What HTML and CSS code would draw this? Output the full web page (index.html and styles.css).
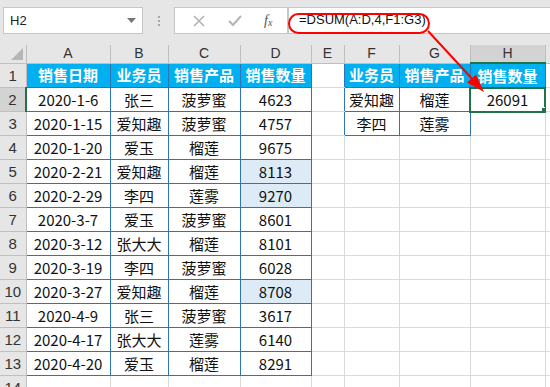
FILE: index.html
```html
<!DOCTYPE html>
<html lang="zh-CN">
<head>
    <meta charset="UTF-8">
    <title>DSUM</title>
    <link rel="stylesheet" href="styles.css">
</head>
<body>
    <div class="toolbar">
        <div class="name-box">
            <span>H2</span>
            <svg class="caret" width="9" height="5" viewBox="0 0 9 5"><path d="M0 0h9L4.5 5z" fill="#777"/></svg>
        </div>
        <div class="dots"><i></i><i></i><i></i></div>
        <div class="fx-box">
            <svg width="14" height="14" viewBox="0 0 14 14"><path d="M2 2l10 10M12 2L2 12" stroke="#b4b4b4" stroke-width="1.6"/></svg>
            <svg width="16" height="14" viewBox="0 0 16 14"><path d="M2 7l4 4 8-9" stroke="#b4b4b4" stroke-width="2" fill="none"/></svg>
            <span class="fx">f<sub>x</sub></span>
        </div>
        <div class="formula">=DSUM(A:D,4,F1:G3)</div>
    </div>

    <table class="sheet">
        <colgroup>
            <col class="c-rh"><col class="c-a"><col class="c-b"><col class="c-c"><col class="c-d">
            <col class="c-e"><col class="c-f"><col class="c-g"><col class="c-h"><col class="c-i">
        </colgroup>
        <tr class="col-heads">
            <th class="corner"><span class="tri"></span></th>
            <th>A</th><th>B</th><th>C</th><th>D</th><th>E</th><th>F</th><th>G</th><th class="sel-col">H</th><th></th>
        </tr>
        <tr>
            <th class="rh">1</th>
            <td class="b hd">销售日期</td><td class="b hd">业务员</td><td class="b hd">销售产品</td><td class="b hd">销售数量</td>
            <td class="nr"></td>
            <td class="b hd">业务员</td><td class="b hd">销售产品</td><td class="b hd">销售数量</td><td></td>
        </tr>
        <tr>
            <th class="rh sel-row">2</th>
            <td class="b">2020-1-6</td><td class="b">张三</td><td class="b">菠萝蜜</td><td class="b">4623</td>
            <td class="nr"></td>
            <td class="b">爱知趣</td><td class="b">榴莲</td><td class="active">26091</td><td></td>
        </tr>
        <tr>
            <th class="rh">3</th>
            <td class="b">2020-1-15</td><td class="b">爱知趣</td><td class="b">菠萝蜜</td><td class="b">4757</td>
            <td class="nr"></td>
            <td class="b">李四</td><td class="b">莲雾</td><td></td><td></td>
        </tr>
        <tr>
            <th class="rh">4</th>
            <td class="b">2020-1-20</td><td class="b">爱玉</td><td class="b">榴莲</td><td class="b">9675</td>
            <td></td><td></td><td></td><td></td><td></td>
        </tr>
        <tr>
            <th class="rh">5</th>
            <td class="b">2020-2-21</td><td class="b">爱知趣</td><td class="b">榴莲</td><td class="b hl">8113</td>
            <td></td><td></td><td></td><td></td><td></td>
        </tr>
        <tr>
            <th class="rh">6</th>
            <td class="b">2020-2-29</td><td class="b">李四</td><td class="b">莲雾</td><td class="b hl">9270</td>
            <td></td><td></td><td></td><td></td><td></td>
        </tr>
        <tr>
            <th class="rh">7</th>
            <td class="b">2020-3-7</td><td class="b">爱玉</td><td class="b">菠萝蜜</td><td class="b">8601</td>
            <td></td><td></td><td></td><td></td><td></td>
        </tr>
        <tr>
            <th class="rh">8</th>
            <td class="b">2020-3-12</td><td class="b">张大大</td><td class="b">榴莲</td><td class="b">8101</td>
            <td></td><td></td><td></td><td></td><td></td>
        </tr>
        <tr>
            <th class="rh">9</th>
            <td class="b">2020-3-19</td><td class="b">李四</td><td class="b">菠萝蜜</td><td class="b">6028</td>
            <td></td><td></td><td></td><td></td><td></td>
        </tr>
        <tr>
            <th class="rh">10</th>
            <td class="b">2020-3-27</td><td class="b">爱知趣</td><td class="b">榴莲</td><td class="b hl">8708</td>
            <td></td><td></td><td></td><td></td><td></td>
        </tr>
        <tr>
            <th class="rh">11</th>
            <td class="b">2020-4-9</td><td class="b">张三</td><td class="b">菠萝蜜</td><td class="b">3617</td>
            <td></td><td></td><td></td><td></td><td></td>
        </tr>
        <tr>
            <th class="rh">12</th>
            <td class="b">2020-4-17</td><td class="b">张大大</td><td class="b">莲雾</td><td class="b">6140</td>
            <td></td><td></td><td></td><td></td><td></td>
        </tr>
        <tr>
            <th class="rh">13</th>
            <td class="b">2020-4-20</td><td class="b">爱玉</td><td class="b">榴莲</td><td class="b">8291</td>
            <td></td><td></td><td></td><td></td><td></td>
        </tr>
        <tr>
            <th class="rh">14</th>
            <td></td><td></td><td></td><td></td><td></td><td></td><td></td><td></td><td></td>
        </tr>
    </table>

    <!-- red callout from the formula to the result cell -->
    <svg class="annot" width="550" height="387" viewBox="0 0 550 387">
        <rect x="289" y="14" width="140" height="19" rx="9.5" fill="none" stroke="#f00" stroke-width="2"/>
        <line x1="428" y1="31" x2="476" y2="83" stroke="#f00" stroke-width="2"/>
        <path d="M484 92L467 82.5 476 74.5z" fill="#f00"/>
    </svg>
</body>
</html>
```

FILE: styles.css
```css
body {
    margin: 0;
    width: 550px;
    height: 387px;
    overflow: hidden;
    background: #fff;
    font-family: "Noto Sans CJK SC", "Liberation Sans", sans-serif;
    position: relative;
}
.toolbar {
    height: 45px;
    background: #e6e6e6;
    display: flex;
    align-items: flex-start;
    padding-top: 7px;
    box-sizing: border-box;
}
.name-box {
    margin-left: 3px;
    width: 140px;
    height: 27px;
    box-sizing: border-box;
    background: #fff;
    border: 1px solid #c6c6c6;
    display: flex;
    align-items: center;
    justify-content: space-between;
    padding: 0 6px 0 6px;
    font: 13px "Liberation Sans", sans-serif;
    color: #222;
}
.dots {
    width: 31px;
    height: 27px;
    display: flex;
    flex-direction: column;
    align-items: center;
    justify-content: center;
    gap: 2px;
}
.dots i {
    width: 2px;
    height: 2px;
    background: #a8a8a8;
}
.fx-box {
    width: 114px;
    height: 27px;
    box-sizing: border-box;
    background: #fff;
    border: 1px solid #c6c6c6;
    display: flex;
    align-items: center;
    justify-content: space-around;
    padding: 0 4px 0 6px;
}
.fx {
    font: italic 14px "Liberation Serif", serif;
    color: #555;
}
.fx sub {
    font-size: 10px;
    vertical-align: -1px;
}
.formula {
    flex: 1;
    height: 27px;
    box-sizing: border-box;
    background: #fff;
    border: 1px solid #c6c6c6;
    border-right: none;
    padding-left: 10px;
    line-height: 24px;
    font: 13px/24px "Liberation Sans", sans-serif;
    color: #111;
}

.sheet {
    border-collapse: collapse;
    table-layout: fixed;
    width: 550px;
    font-size: 15px;
    color: #111;
}
.c-rh { width: 26px; }
.c-a { width: 84px; }
.c-b { width: 58px; }
.c-c { width: 72px; }
.c-d { width: 71px; }
.c-e { width: 33px; }
.c-f { width: 55px; }
.c-g { width: 71px; }
.c-h { width: 75px; }
.c-i { width: 5px; }

.sheet th,
.sheet td {
    padding: 0;
    text-align: center;
    white-space: nowrap;
    overflow: hidden;
}
.col-heads th {
    height: 17px;
    background: #e6e6e6;
    border-right: 1px solid #bfbfbf;
    border-bottom: 1px solid #bfbfbf;
    font: 14px/17px "Liberation Sans", sans-serif;
    color: #333;
}
.col-heads .corner {
    position: relative;
}
.tri {
    position: absolute;
    right: 3px;
    bottom: 3px;
    width: 0;
    height: 0;
    border-left: 12px solid transparent;
    border-bottom: 12px solid #b6b6b6;
}
.col-heads .sel-col {
    background: #d3d3d3;
    border-bottom: 2px solid #217346;
}
.rh {
    height: 23px;
    background: #e6e6e6;
    border-right: 1px solid #bfbfbf;
    border-bottom: 1px solid #bfbfbf;
    font: 15px "Liberation Sans", sans-serif;
    font-weight: normal;
    color: #333;
}
.rh.sel-row {
    background: #d3d3d3;
    border-right: 2px solid #217346;
}
.sheet td {
    height: 23px;
    border-right: 1px solid #dadada;
    border-bottom: 1px solid #dadada;
    line-height: 22px;
}
.sheet td.nr { border-right: none; }
.sheet td.b { border: 1px solid #2e75b6; }
.sheet td.hd {
    background: #00b0f0;
    color: #fff;
    font-weight: bold;
}
.sheet td.hl { background: #ddebf7; }
.sheet td.active {
    position: relative;
    outline: 2px solid #217346;
    outline-offset: -1px;
}
.sheet td.active::after {
    content: "";
    position: absolute;
    right: -3px;
    bottom: -3px;
    width: 5px;
    height: 5px;
    background: #217346;
    border: 1px solid #fff;
}
.annot {
    position: absolute;
    left: 0;
    top: 0;
    pointer-events: none;
}
```
